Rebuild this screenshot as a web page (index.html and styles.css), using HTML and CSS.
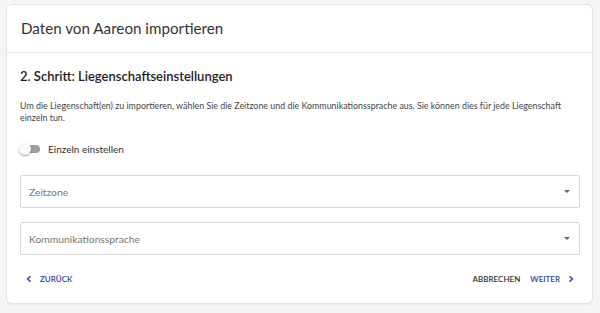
FILE: index.html
```html
<!DOCTYPE html>
<html lang="de">

<head>
    <meta charset="UTF-8">
    <meta name="viewport" content="width=device-width, initial-scale=1.0">
    <title>Daten von Aareon importieren</title>
    <link rel="stylesheet" href="styles.css">
</head>

<body>
    <div class="card">
        <div class="card-header">Daten von Aareon importieren</div>
        <div class="card-body">
            <h2 class="step-title">2. Schritt: Liegenschaftseinstellungen</h2>
            <p class="hint">Um die Liegenschaft(en) zu importieren, wählen Sie die Zeitzone und die Kommunikationssprache aus. Sie können dies für jede Liegenschaft einzeln tun.</p>
            <label class="switch-row">
                <span class="switch"><span class="knob"></span></span>
                <span>Einzeln einstellen</span>
            </label>
            <div class="select">
                <span class="placeholder">Zeitzone</span>
                <span class="caret"></span>
            </div>
            <div class="select">
                <span class="placeholder">Kommunikationssprache</span>
                <span class="caret"></span>
            </div>
            <div class="actions">
                <button class="btn btn-primary">
                    <svg width="8" height="8" viewBox="0 0 8 8"><path d="M5.5 1.2 2.7 4l2.8 2.8" fill="none" stroke="currentColor" stroke-width="1.4"/></svg>
                    Zurück
                </button>
                <div class="spacer"></div>
                <button class="btn">Abbrechen</button>
                <button class="btn btn-primary">
                    Weiter
                    <svg width="8" height="8" viewBox="0 0 8 8"><path d="M2.5 1.2 5.3 4 2.5 6.8" fill="none" stroke="currentColor" stroke-width="1.4"/></svg>
                </button>
            </div>
        </div>
    </div>
</body>

</html>
```

FILE: styles.css
```css
body {
    font-family: 'Lato', sans-serif;
    margin: 0;
    padding: 4px 7px 9px 6px;
    background-color: #f5f5f5;
    color: #333;
}

.card {
    background-color: #ffffff;
    border: 1px solid #e4e4e4;
    border-radius: 6px;
    box-shadow: 0 1px 2px rgba(0, 0, 0, 0.06);
}

.card-header {
    height: 47px;
    line-height: 47px;
    padding: 0 14px;
    font-size: 15.2px;
    color: #333;
    border-bottom: 1px solid #e6e6e6;
}

.card-body {
    padding: 14px 12px 16px 13px;
}

.step-title {
    margin: 0;
    font-size: 13px;
    font-weight: 600;
    line-height: 18px;
    color: #222;
}

.hint {
    margin: 15px 0 0 0;
    font-size: 8.9px;
    line-height: 12px;
    color: #444;
}

.switch-row {
    display: flex;
    align-items: center;
    gap: 8px;
    margin-top: 19px;
    font-size: 10px;
    color: #333;
}

.switch {
    position: relative;
    width: 20px;
    height: 8px;
    border-radius: 4px;
    background-color: #9e9e9e;
}

.switch .knob {
    position: absolute;
    left: -1px;
    top: -2px;
    width: 12px;
    height: 12px;
    border-radius: 50%;
    background-color: #fafafa;
    box-shadow: 0 1px 2px rgba(0, 0, 0, 0.35);
}

.select {
    display: flex;
    align-items: center;
    height: 31px;
    margin-top: 20px;
    padding: 0 9px 0 8px;
    border: 1px solid #d9d9d9;
    border-radius: 2px;
    font-size: 10.3px;
    color: #777;
}

.select + .select {
    margin-top: 14px;
}

.placeholder {
    flex: 1;
}

.caret {
    width: 0;
    height: 0;
    border-left: 3.5px solid transparent;
    border-right: 3.5px solid transparent;
    border-top: 3.5px solid #666;
}

.actions {
    display: flex;
    align-items: center;
    margin-top: 16px;
    height: 16px;
}

.spacer {
    flex: 1;
}

.btn {
    display: flex;
    align-items: center;
    gap: 7px;
    background: none;
    border: none;
    padding: 0 5px;
    font-family: inherit;
    font-size: 8px;
    font-weight: 600;
    text-transform: uppercase;
    color: #333;
    cursor: pointer;
}

.btn-primary {
    color: #2b3f94;
}
```
